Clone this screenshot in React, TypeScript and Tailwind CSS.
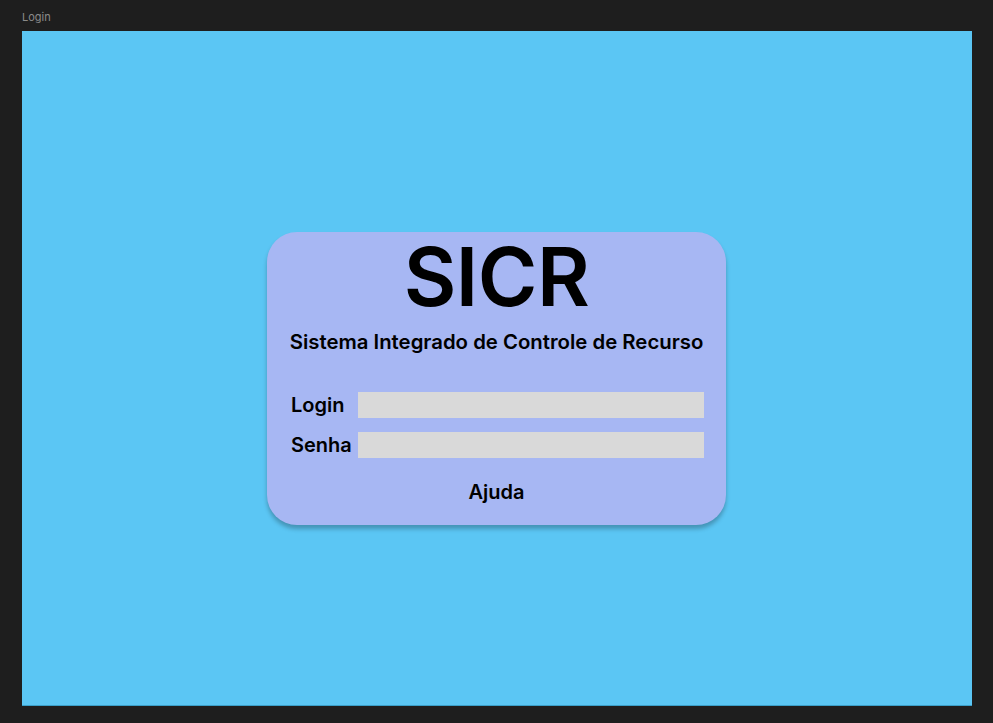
export default function App() {
  return (
    <div className="w-[993px] h-[723px] bg-[#1e1e1e] font-['Inter',sans-serif] flex flex-col">
      {/* Frame label */}
      <div className="h-[31px] pl-[22px] pt-[10px] text-[11px] leading-[14px] text-[#8a8a8a]">
        Login
      </div>

      {/* Frame */}
      <div className="ml-[22px] w-[950px] h-[675px] bg-[#5bc6f4] border-b border-[#3a9fc9] flex justify-center pt-[201px] pr-[1px]">
        <div className="w-[459px] h-[293px] rounded-[30px] bg-[#a7b7f3] shadow-[0_4px_4px_rgba(0,0,0,0.25)] flex flex-col items-center text-black">
          <h1 className="mt-[5px] text-[81px] leading-[81px] font-semibold tracking-[-0.5px]">
            SICR
          </h1>
          <p className="mt-[12px] text-[20.35px] leading-[24px] font-semibold">
            Sistema Integrado de Controle de Recurso
          </p>

          <div className="mt-[38px] flex flex-col gap-[14px] self-start pl-[24px]">
            <label className="flex items-center">
              <span className="w-[67px] text-[20px] leading-[24px] font-semibold">Login</span>
              <input className="w-[346px] h-[26px] bg-[#d9d9d9] outline-none px-2 text-sm" />
            </label>
            <label className="flex items-center">
              <span className="w-[67px] text-[20px] leading-[24px] font-semibold">Senha</span>
              <input
                type="password"
                className="w-[346px] h-[26px] bg-[#d9d9d9] outline-none px-2 text-sm"
              />
            </label>
          </div>

          <button className="mt-[22px] text-[20px] leading-[24px] font-semibold">Ajuda</button>
        </div>
      </div>
    </div>
  );
}
